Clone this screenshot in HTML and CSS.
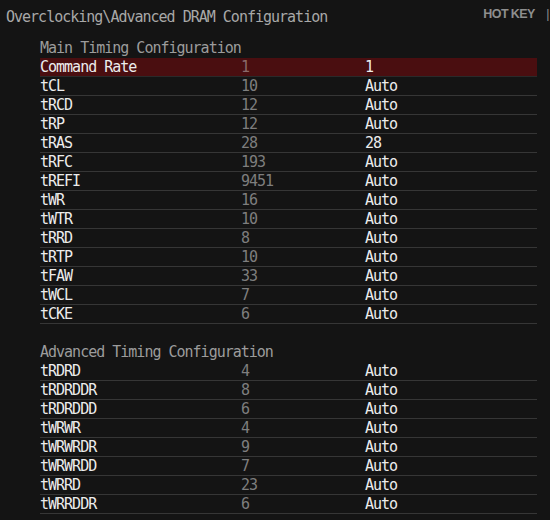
FILE: index.html
```html
<!DOCTYPE html>
<html lang="en">
<head>
    <meta charset="UTF-8">
    <meta name="viewport" content="width=device-width, initial-scale=1.0">
    <title>Advanced DRAM Configuration</title>
    <link rel="stylesheet" href="styles.css">
</head>
<body>
    <div class="header">
        <div class="path">Overclocking\Advanced DRAM Configuration</div>
        <div class="hotkey">HOT KEY <span class="bar">|</span></div>
    </div>

    <div class="section">
        <h2>Main Timing Configuration</h2>
        <div class="row selected"><span>Command Rate</span><span class="cur">1</span><span class="val">1</span></div>
        <div class="row"><span>tCL</span><span class="cur">10</span><span class="val">Auto</span></div>
        <div class="row"><span>tRCD</span><span class="cur">12</span><span class="val">Auto</span></div>
        <div class="row"><span>tRP</span><span class="cur">12</span><span class="val">Auto</span></div>
        <div class="row"><span>tRAS</span><span class="cur">28</span><span class="val">28</span></div>
        <div class="row"><span>tRFC</span><span class="cur">193</span><span class="val">Auto</span></div>
        <div class="row"><span>tREFI</span><span class="cur">9451</span><span class="val">Auto</span></div>
        <div class="row"><span>tWR</span><span class="cur">16</span><span class="val">Auto</span></div>
        <div class="row"><span>tWTR</span><span class="cur">10</span><span class="val">Auto</span></div>
        <div class="row"><span>tRRD</span><span class="cur">8</span><span class="val">Auto</span></div>
        <div class="row"><span>tRTP</span><span class="cur">10</span><span class="val">Auto</span></div>
        <div class="row"><span>tFAW</span><span class="cur">33</span><span class="val">Auto</span></div>
        <div class="row"><span>tWCL</span><span class="cur">7</span><span class="val">Auto</span></div>
        <div class="row"><span>tCKE</span><span class="cur">6</span><span class="val">Auto</span></div>
    </div>

    <div class="section">
        <h2>Advanced Timing Configuration</h2>
        <div class="row"><span>tRDRD</span><span class="cur">4</span><span class="val">Auto</span></div>
        <div class="row"><span>tRDRDDR</span><span class="cur">8</span><span class="val">Auto</span></div>
        <div class="row"><span>tRDRDDD</span><span class="cur">6</span><span class="val">Auto</span></div>
        <div class="row"><span>tWRWR</span><span class="cur">4</span><span class="val">Auto</span></div>
        <div class="row"><span>tWRWRDR</span><span class="cur">9</span><span class="val">Auto</span></div>
        <div class="row"><span>tWRWRDD</span><span class="cur">7</span><span class="val">Auto</span></div>
        <div class="row"><span>tWRRD</span><span class="cur">23</span><span class="val">Auto</span></div>
        <div class="row"><span>tWRRDDR</span><span class="cur">6</span><span class="val">Auto</span></div>
    </div>
</body>
</html>
```

FILE: styles.css
```css
body {
    margin: 0;
    padding: 0;
    background-color: #141414;
    color: #ececec;
    font-family: "DejaVu Sans Mono", monospace;
    font-size: 15px;
    letter-spacing: -1px;
    overflow: hidden;
}

.header {
    display: flex;
    justify-content: space-between;
    align-items: flex-start;
    padding: 7px 0 0 6px;
    height: 32px;
}

.path {
    color: #a8a8a8;
    line-height: 20px;
}

.hotkey {
    font-family: "Liberation Sans", Arial, sans-serif;
    font-weight: bold;
    font-size: 12.5px;
    letter-spacing: -0.6px;
    color: #8e8e8e;
    line-height: 14px;
    white-space: nowrap;
    padding-right: 1px;
}

.hotkey .bar {
    margin-left: 9px;
    font-weight: normal;
}

.section {
    margin: 0 13px 19px 40px;
}

h2 {
    margin: 0;
    font-size: 15px;
    font-weight: normal;
    color: #9c9c9c;
    line-height: 19px;
}

.row {
    display: grid;
    grid-template-columns: 201px 124px 1fr;
    height: 18px;
    line-height: 18px;
    border-bottom: 1px solid #363636;
}

.row.selected {
    background-color: #4a0e10;
    border-bottom-color: #2a2a2a;
}

.cur {
    color: #7e7e7e;
}

.row.selected .cur {
    color: #8a6a6a;
}

.val {
    color: #ececec;
}
```
